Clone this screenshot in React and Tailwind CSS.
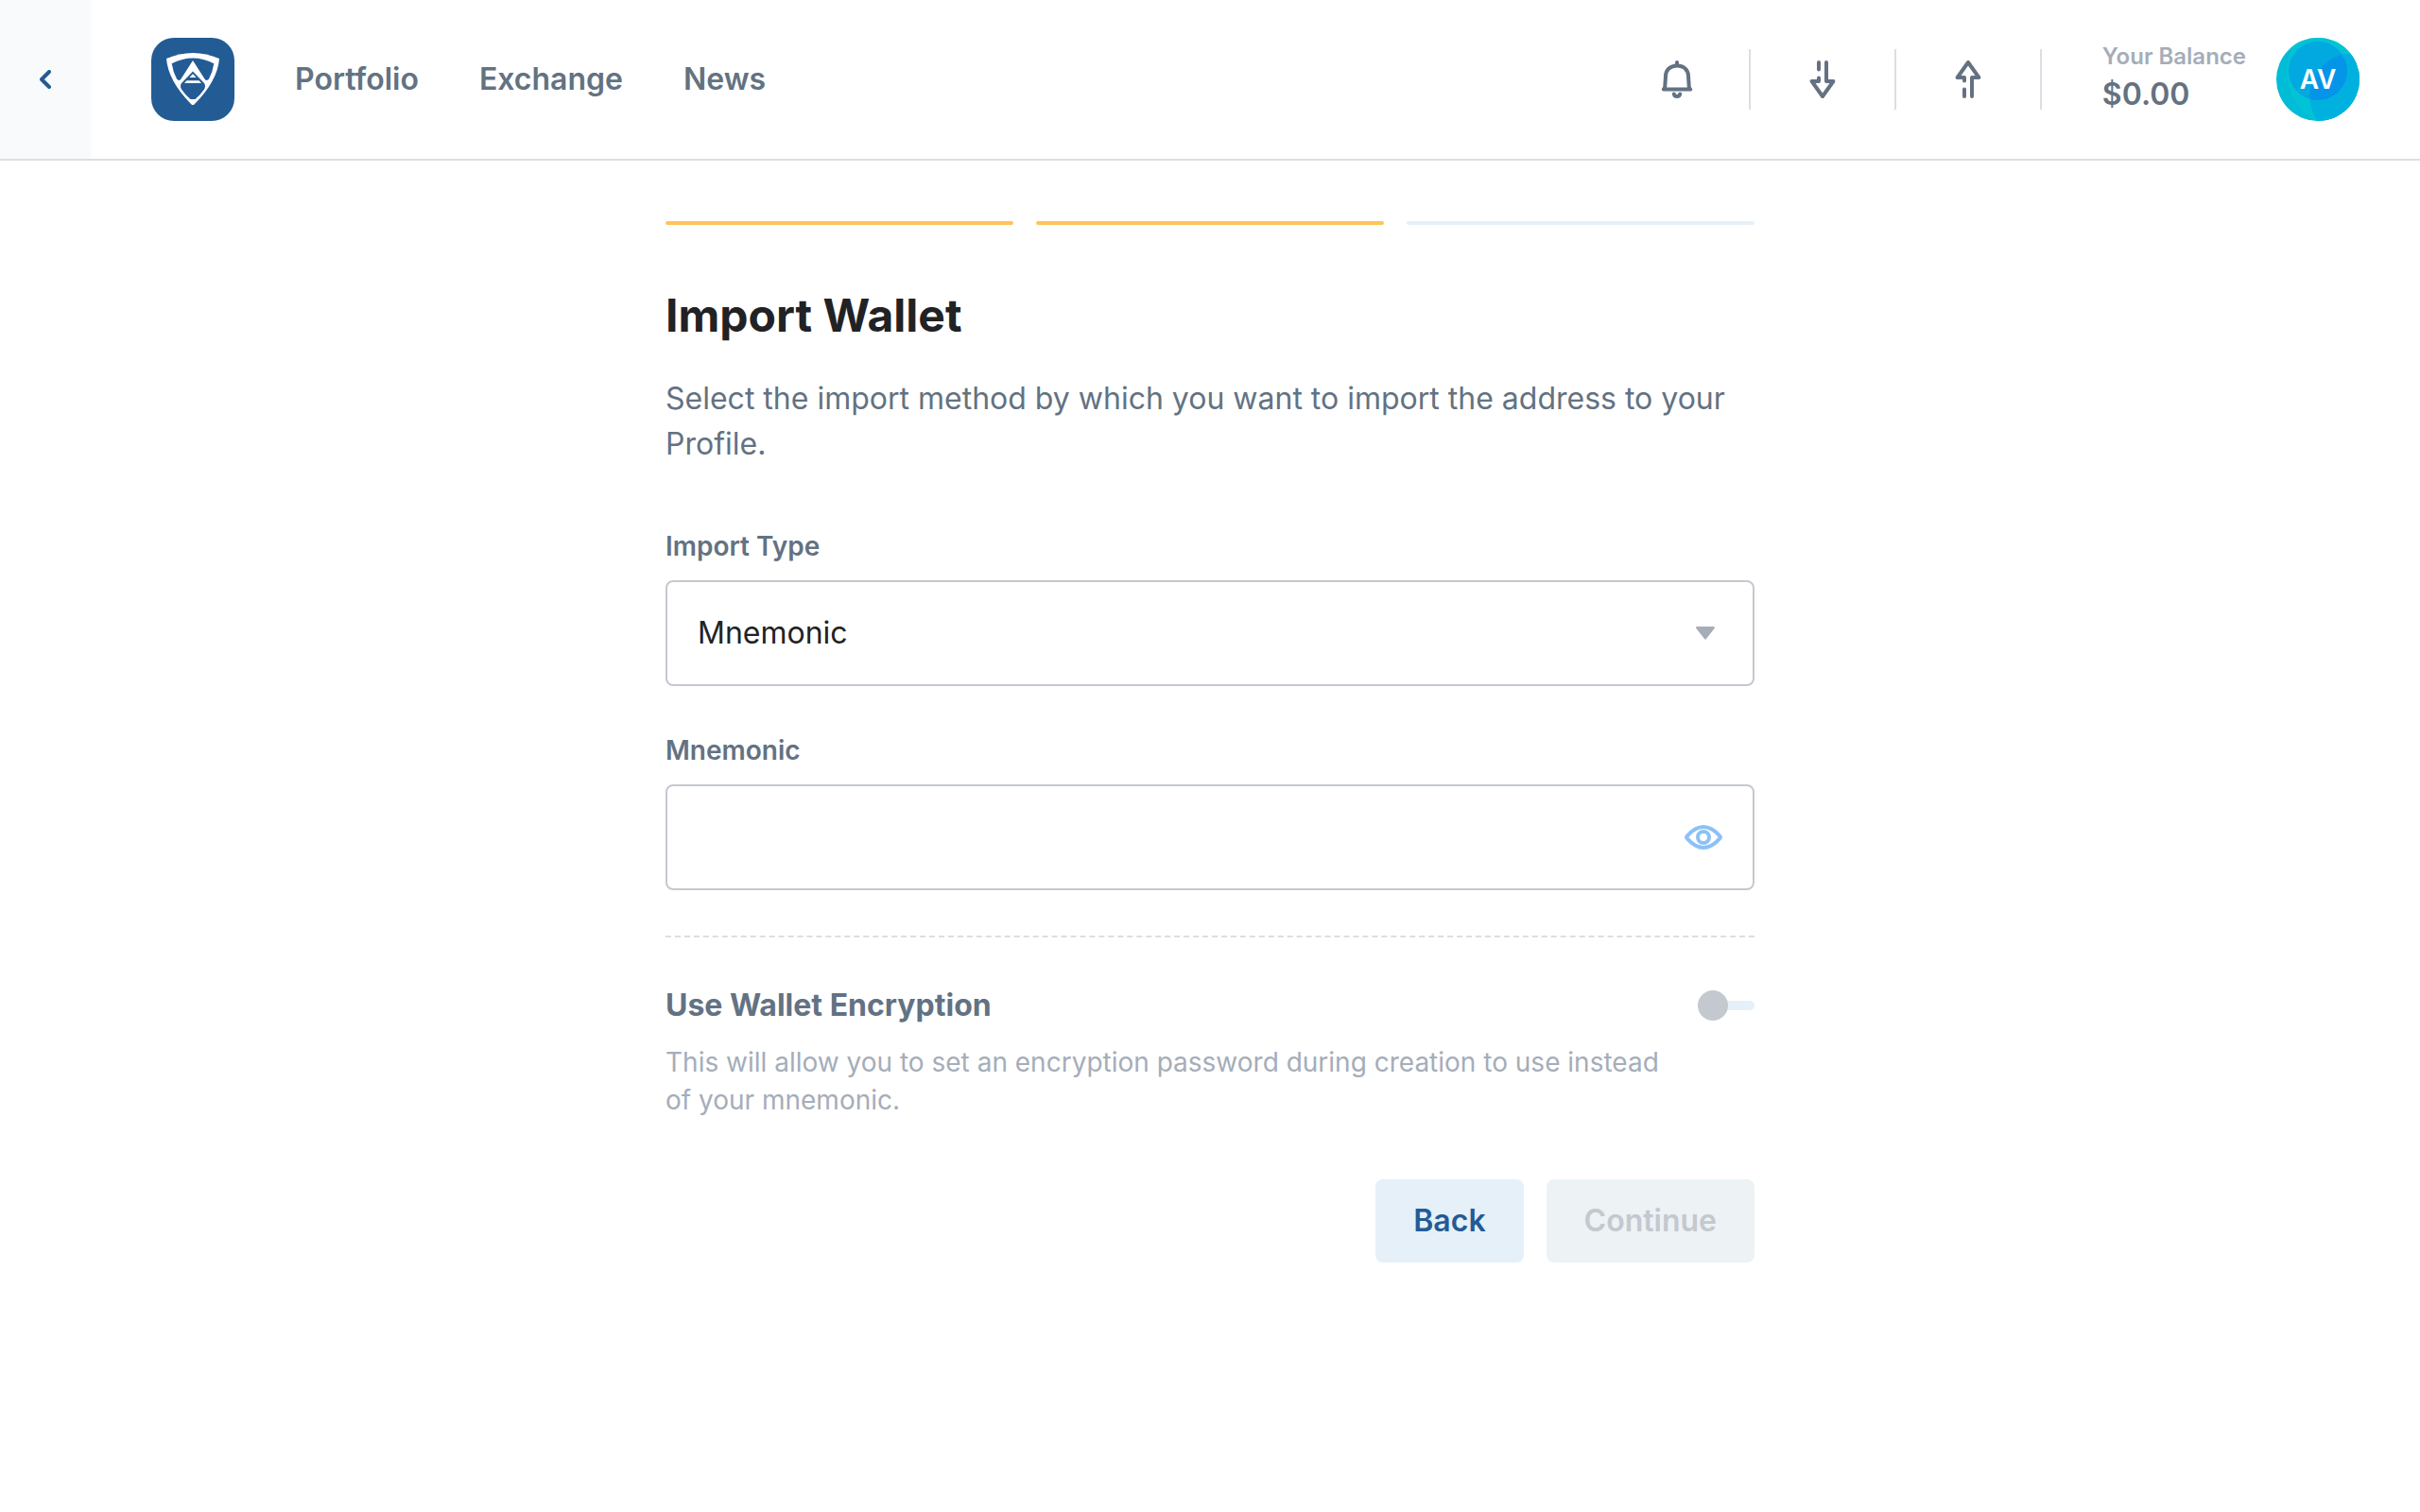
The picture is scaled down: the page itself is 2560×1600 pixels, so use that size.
import { useState } from 'react';

const NAV_LINKS = ['Portfolio', 'Exchange', 'News'];
const STEPS = [true, true, false];

function Logo() {
  return (
    <svg viewBox="0 0 88 88" className="size-[88px]" aria-hidden="true">
      <rect width="88" height="88" rx="24" fill="#235b95" />
      <path d="M16 22Q44 10 72 22Q70 46 45.5 70.5Q44 71.5 42.5 70.5Q18 46 16 22Z" fill="#fff" />
      <path
        d="M21.7 27.2Q44 16 66.3 27.2Q65 36 61 43.5Q59 46 56.8 44L44 24L31.2 44Q29 46 27 43.5Q23 36 21.7 27.2Z"
        fill="#235b95"
      />
      <path d="M44 35.5L56 48Q58 51 56 54.5Q52 60.5 46.5 65H41.5Q36 60.5 32 54.5Q30 51 32 48Z" fill="#235b95" />
      <path d="M44 38.2L47.6 42H40.4ZM37.5 45.3H50.5L53 48H35Z" fill="#fff" />
    </svg>
  );
}

function Icon({ children }) {
  return (
    <svg
      viewBox="0 0 40 40"
      className="size-10"
      fill="none"
      stroke="currentColor"
      strokeWidth="4"
      strokeLinecap="round"
      strokeLinejoin="round"
      aria-hidden="true"
    >
      {children}
    </svg>
  );
}

function HeaderAction({ label, children }) {
  return (
    <button type="button" aria-label={label} className="mx-14 cursor-pointer text-[#637282]">
      <Icon>{children}</Icon>
    </button>
  );
}

function Divider() {
  return <div className="h-16 w-0.5 bg-[#dbdee5]" />;
}

function Avatar() {
  return (
    <button type="button" aria-label="Profile menu" className="grid size-[88px] cursor-pointer place-items-center overflow-hidden rounded-full">
      <svg viewBox="0 0 88 88" className="col-start-1 row-start-1 size-[88px]" aria-hidden="true">
        <defs>
          <clipPath id="avatar-inner">
            <circle cx="44" cy="35" r="31" />
          </clipPath>
        </defs>
        <rect width="88" height="88" fill="#00bcd6" />
        <circle cx="72" cy="35" r="61" fill="#02c3d6" />
        <circle cx="81" cy="62" r="45.5" fill="#00b1df" />
        <circle cx="44" cy="35" r="31" fill="#02a8e0" />
        <circle cx="81" cy="62" r="45.5" fill="#0595e8" clipPath="url(#avatar-inner)" />
      </svg>
      <span className="col-start-1 row-start-1 text-[28px] leading-10 font-semibold text-white">AV</span>
    </button>
  );
}

function Header() {
  return (
    <header className="flex h-[170px] items-center border-b-2 border-[#dbdee5] bg-white pr-16">
      <button type="button" aria-label="Go back" className="flex h-full w-24 cursor-pointer items-center justify-center bg-[#f9fafc] text-[#235b95]">
        <svg viewBox="0 0 12 20" className="h-5 w-3" fill="none" stroke="currentColor" strokeWidth="4" strokeLinecap="round" strokeLinejoin="round" aria-hidden="true">
          <path d="M10 2L2 10L10 18" />
        </svg>
      </button>

      <a href="#home" aria-label="Home" className="ml-16">
        <Logo />
      </a>

      <nav className="ml-16 flex gap-16">
        {NAV_LINKS.map((link) => (
          <a key={link} href={`#${link.toLowerCase()}`} className="text-[32px] leading-12 font-semibold text-[#637282]">
            {link}
          </a>
        ))}
      </nav>

      <div className="ml-auto flex items-center">
        <HeaderAction label="Notifications">
          <path d="M20 2V5.3M5.8 30.6L7.2 28.5L8 16.5C8 10 13 5.4 20 5.4S32 10 32 16.5L32.8 28.5L34.2 30.6Z" />
          <path d="M16.8 35.4C17.4 38.8 22.6 38.8 23.2 35.4" />
        </HeaderAction>
        <Divider />
        <HeaderAction label="Receive funds">
          <path d="M24 2V22H31.4L20 38L8.6 22H16V18.4M16 9.6V2" />
        </HeaderAction>
        <Divider />
        <HeaderAction label="Send funds">
          <path d="M24 38V18H31.4L20 2L8.6 18H16V21.6M16 30.4V38" />
        </HeaderAction>
        <Divider />

        <div className="ml-16 mr-8">
          <p className="text-2xl leading-8 font-semibold text-[#a5adb9]">Your Balance</p>
          <p className="text-[32px] leading-12 font-semibold text-[#637282]">$0.00</p>
        </div>
        <Avatar />
      </div>
    </header>
  );
}

function App() {
  const [importType, setImportType] = useState('mnemonic');
  const [secret, setSecret] = useState('');
  const [isSecretVisible, setIsSecretVisible] = useState(false);
  const [useEncryption, setUseEncryption] = useState(false);

  return (
    <div className="min-h-screen bg-white font-[Inter,sans-serif]">
      <Header />

      <main className="mx-auto max-w-6xl pt-16 pb-16">
        {/* Progress */}
        <div className="grid grid-cols-3 gap-6">
          {STEPS.map((done, i) => (
            <div key={i} className={`h-1 rounded-full ${done ? 'bg-[#ffc457]' : 'bg-[#e5f0f8]'}`} />
          ))}
        </div>

        <h1 className="mt-16 text-5xl leading-16 font-bold text-[#212225]">Import Wallet</h1>
        <p className="mt-8 text-[32px] leading-12 text-[#637282]">
          Select the import method by which you want to import the address to your Profile.
        </p>

        <form className="mt-16" onSubmit={(e) => e.preventDefault()}>
          <label htmlFor="import-type" className="block text-[28px] leading-10 font-semibold text-[#637282]">
            Import Type
          </label>
          <div className="relative mt-4">
            <select
              id="import-type"
              value={importType}
              onChange={(e) => setImportType(e.target.value)}
              className="block h-28 w-full appearance-none rounded-lg border-2 border-[#c4c8cf] bg-white px-8 text-[32px] text-[#212225]"
            >
              <option value="mnemonic">Mnemonic</option>
              <option value="address">Address</option>
            </select>
            <svg viewBox="0 0 20 14" className="pointer-events-none absolute inset-y-0 right-[42px] my-auto h-3.5 w-5" aria-hidden="true">
              <path d="M1 0H19Q20.5 0.5 19.6 2L11 13Q10 14.6 9 13L0.4 2Q-0.5 0.5 1 0Z" fill="#a5adb9" />
            </svg>
          </div>

          <label htmlFor="mnemonic" className="mt-12 block text-[28px] leading-10 font-semibold text-[#637282]">
            Mnemonic
          </label>
          <div className="mt-4 flex h-28 items-center rounded-lg border-2 border-[#c4c8cf] pr-8">
            <input
              id="mnemonic"
              type={isSecretVisible ? 'text' : 'password'}
              value={secret}
              onChange={(e) => setSecret(e.target.value)}
              className="h-full min-w-0 flex-1 px-8 text-[32px] text-[#212225] outline-none"
            />
            <button
              type="button"
              aria-label="Toggle visibility"
              onClick={() => setIsSecretVisible(!isSecretVisible)}
              className="cursor-pointer text-[#8cc1f7]"
            >
              <svg viewBox="0 0 40 26" className="h-[26px] w-10" fill="none" stroke="currentColor" strokeWidth="4" aria-hidden="true">
                <path d="M2.8 14.4Q1.4 13 2.8 11.6C14 -1.2 26 -1.2 37.2 11.6Q38.6 13 37.2 14.4C26 27.2 14 27.2 2.8 14.4Z" />
                <circle cx="20" cy="13" r="6" />
              </svg>
            </button>
          </div>

          <hr className="mt-12 border-t-2 border-dashed border-[#dbdee5]" />

          {/* Encryption toggle */}
          <div className="mt-12 flex items-center justify-between">
            <label htmlFor="encryption" className="text-[32px] leading-12 font-bold text-[#637282]">
              Use Wallet Encryption
            </label>
            <span className="relative flex h-8 w-[60px] items-center">
              <input
                id="encryption"
                type="checkbox"
                role="switch"
                checked={useEncryption}
                onChange={(e) => setUseEncryption(e.target.checked)}
                className="peer h-2.5 w-full cursor-pointer appearance-none rounded-full bg-[#e5f0f8]"
              />
              <span className="pointer-events-none absolute left-0 size-8 rounded-full bg-[#c4c8cf] peer-checked:left-7 peer-checked:bg-[#235b95]" />
            </span>
          </div>
          <p className="mt-4 mr-20 text-[28px] leading-10 text-[#a5adb9]">
            This will allow you to set an encryption password during creation to use instead of your mnemonic.
          </p>

          <div className="mt-16 flex justify-end gap-6 text-[32px] leading-12 font-semibold">
            <button type="button" className="h-[88px] cursor-pointer rounded-lg bg-[#e5f0f8] px-10 text-[#235b95]">
              Back
            </button>
            <button type="submit" disabled className="h-[88px] rounded-lg bg-[#edf2f5] px-10 text-[#c4c8cf]">
              Continue
            </button>
          </div>
        </form>
      </main>
    </div>
  );
}

export default App;
